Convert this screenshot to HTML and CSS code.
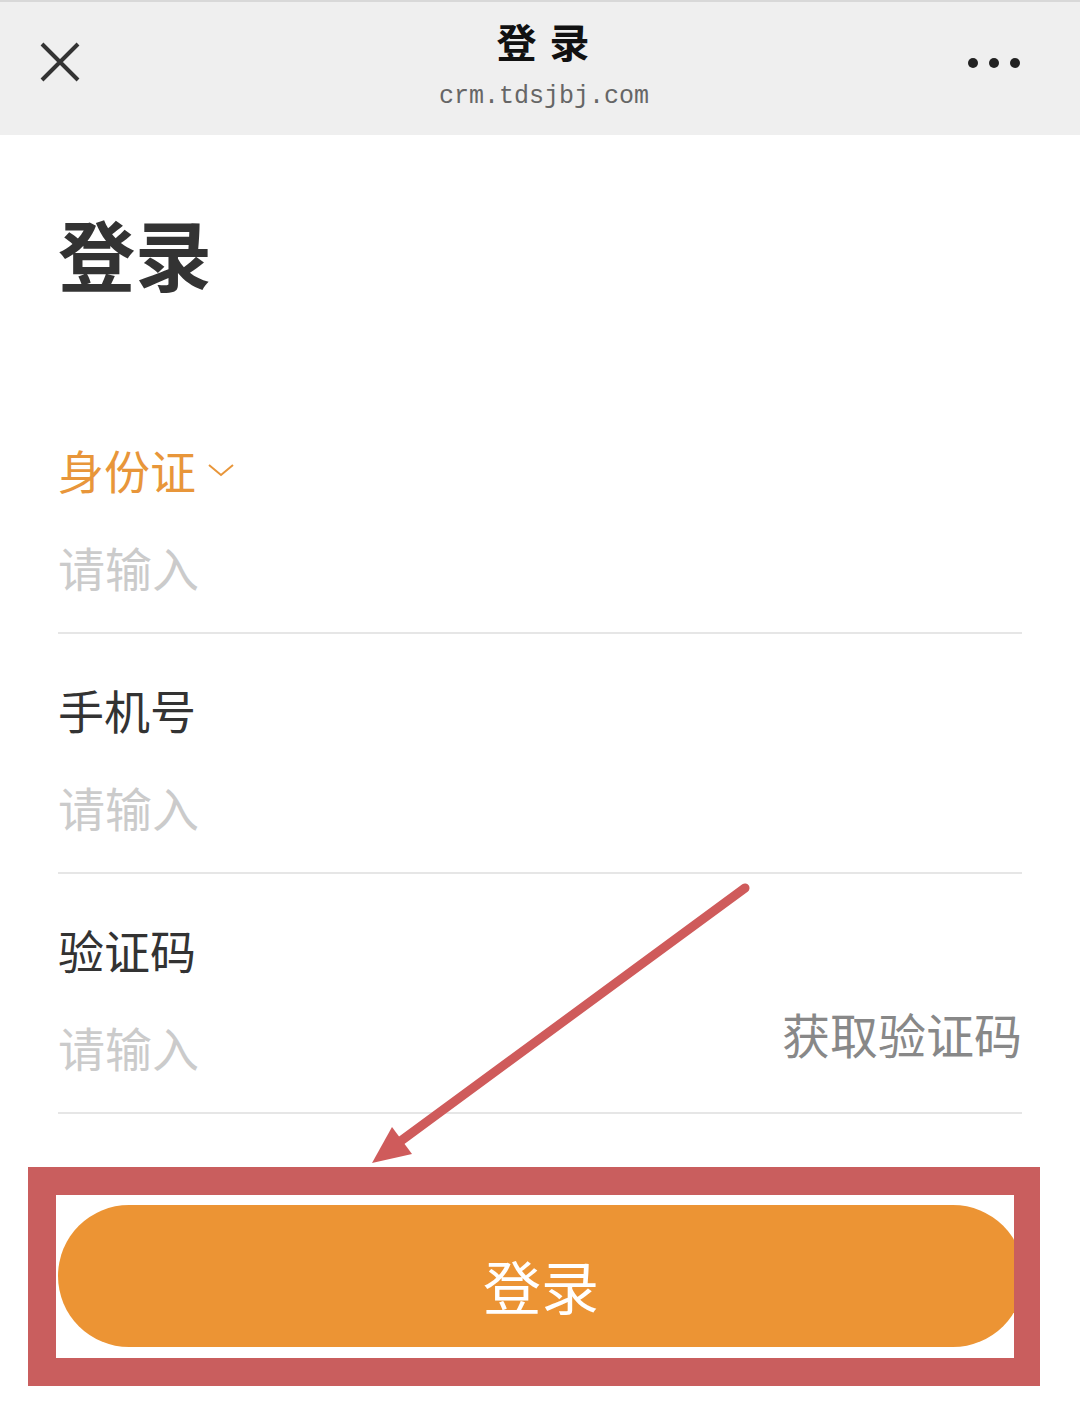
FILE: index.html
```html
<!DOCTYPE html>
<html lang="zh-CN">
<head>
  <meta charset="UTF-8">
  <meta name="viewport" content="width=device-width, initial-scale=1.0">
  <title>登录</title>
  <link rel="stylesheet" href="styles.css">
</head>
<body>
  <div class="topbar">
    <svg class="close" width="44" height="44" viewBox="0 0 44 44">
      <path d="M4 4 L40 40 M40 4 L4 40" stroke="#333" stroke-width="4" fill="none"/>
    </svg>
    <div class="topbar-title">
      <div class="site-name">登 录</div>
      <div class="site-url">crm.tdsjbj.com</div>
    </div>
    <svg class="more" width="56" height="14" viewBox="0 0 56 14">
      <circle cx="7" cy="7" r="5" fill="#222"/>
      <circle cx="28" cy="7" r="5" fill="#222"/>
      <circle cx="49" cy="7" r="5" fill="#222"/>
    </svg>
  </div>

  <div class="content">
    <h1>登录</h1>

    <div class="field first">
      <div class="label active">身份证
        <svg class="chevron" width="26" height="14" viewBox="0 0 26 14">
          <polyline points="1,2 13,12 25,2" stroke="#e8963a" stroke-width="2" fill="none"/>
        </svg>
      </div>
      <input type="text" placeholder="请输入">
    </div>

    <div class="field">
      <div class="label">手机号</div>
      <input type="text" placeholder="请输入">
    </div>

    <div class="field">
      <div class="label">验证码</div>
      <div class="code-row">
        <input type="text" placeholder="请输入">
        <span class="get-code">获取验证码</span>
      </div>
    </div>
  </div>

  <div class="mark">
    <button class="login-btn">登录</button>
  </div>

  <svg class="arrow" width="1080" height="1419" viewBox="0 0 1080 1419">
    <line x1="745" y1="888" x2="398" y2="1143" stroke="#cf5b5b" stroke-width="9" stroke-linecap="round"/>
    <polygon points="372,1163 392,1127 412,1154" fill="#cf5b5b"/>
  </svg>
</body>
</html>
```

FILE: styles.css
```css
body {
  margin: 0;
  background: #fff;
  font-family: "Noto Sans CJK SC", "Noto Sans", sans-serif;
  color: #333;
  position: relative;
  height: 1419px;
  overflow: hidden;
}
.topbar {
  height: 133px;
  background: #efefef;
  border-top: 2px solid #d8d8d8;
  display: flex;
  align-items: center;
  justify-content: space-between;
  padding: 0 58px 0 38px;
}
.close {
  margin-top: -14px;
}
.topbar-title {
  text-align: center;
  margin: -6px 0 0 40px;
}
.site-name {
  font-size: 40px;
  font-weight: 700;
  line-height: 48px;
  color: #111;
  letter-spacing: 2px;
}
.site-url {
  font-family: "Liberation Mono", monospace;
  font-size: 25px;
  line-height: 36px;
  color: #666;
  margin-top: 14px;
}
.more {
  margin-top: -12px;
}
.content {
  padding: 0 58px;
}
h1 {
  margin: 73px 0 0 0;
  font-size: 77px;
  line-height: 90px;
  font-weight: 700;
  color: #333;
}
.field {
  padding: 44px 0 34px;
  border-bottom: 2px solid #e6e6e6;
}
.field.first {
  padding-top: 140px;
}
.label {
  font-size: 46px;
  line-height: 62px;
  height: 62px;
  color: #333;
  display: flex;
  align-items: center;
}
.label.active {
  color: #e8963a;
}
.chevron {
  margin-left: 12px;
  margin-top: 2px;
}
input {
  display: block;
  margin-top: 36px;
  border: none;
  outline: none;
  padding: 0;
  font-family: inherit;
  font-size: 47px;
  line-height: 62px;
  height: 62px;
  width: 500px;
  background: transparent;
  color: #333;
}
input::placeholder {
  color: #cbcbcb;
}
.code-row {
  display: flex;
  justify-content: space-between;
  align-items: flex-end;
}
.get-code {
  font-size: 48px;
  line-height: 62px;
  color: #888;
  margin-bottom: 14px;
}
.mark {
  margin: 53px 0 0 28px;
  width: 956px;
  border: 28px solid #c95e5e;
  border-right-width: 26px;
  padding: 10px 0 11px 2px;
  overflow: hidden;
  background: #fff;
}
.login-btn {
  display: block;
  width: 966px;
  height: 142px;
  border: none;
  border-radius: 71px;
  background: #ec9434;
  color: #fff;
  font-family: inherit;
  font-size: 58px;
  padding: 18px 0 0;
}
.arrow {
  position: absolute;
  left: 0;
  top: 0;
  pointer-events: none;
}
```
